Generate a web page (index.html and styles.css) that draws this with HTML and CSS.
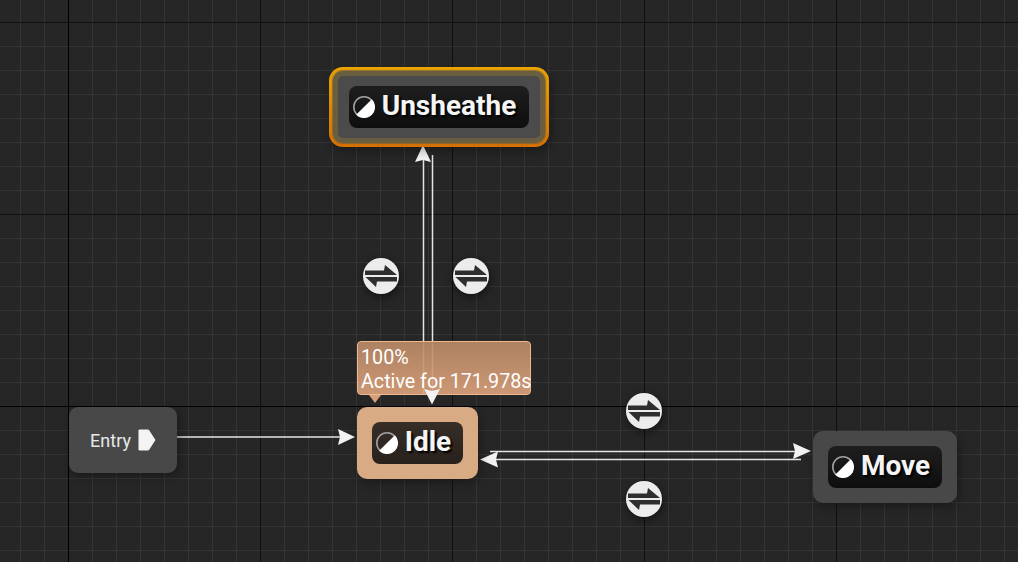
FILE: index.html
```html
<!DOCTYPE html>
<html lang="en">
<head>
<meta charset="utf-8">
<title>State Machine</title>
<link rel="stylesheet" href="styles.css">
</head>
<body>
<main class="graph">
  <svg class="wires" width="1018" height="562" viewBox="0 0 1018 562">
    <g class="wire">
      <path d="M177 437H342"/>
      <path d="M423.500 158V395"/>
      <path d="M432.500 155V392"/>
      <path d="M490 451.500H798"/>
      <path d="M492 459.500H801"/>
    </g>
    <g class="head">
      <path d="M355 437L338 429L340 437L338 445Z"/>
      <path d="M423 145L415 162L423 160L431 162Z"/>
      <path d="M811 451L793 443L795 451L793 459Z"/>
      <path d="M480 459.500L498 451.500L496 459.500L498 467.500Z"/>
    </g>
  </svg>

  <svg class="defs" width="0" height="0">
    <defs>
      <symbol id="transition" viewBox="-19 -19 38 38">
        <circle r="18" fill="#ececec"/>
        <path fill="#2e2e2e" d="M-16 -5.500H3L4 -11L16 -1L-16 -1Z"/>
        <path fill="#2e2e2e" d="M16 5.500H-4L-5 11L-15.500 1L16 1Z"/>
      </symbol>
      <symbol id="state" viewBox="0 0 22 22">
        <circle cx="11" cy="11" r="10.200" fill="none" stroke="#a0a0a0" stroke-width="1.600"/>
        <path fill="#fff" d="M18.800 3.200A11 11 0 0 1 3.200 18.800Z"/>
      </symbol>
    </defs>
  </svg>

  <svg class="transition t-a"><use href="#transition"/></svg>
  <svg class="transition t-b"><use href="#transition"/></svg>
  <svg class="transition t-c"><use href="#transition"/></svg>
  <svg class="transition t-d"><use href="#transition"/></svg>

  <div class="entry">
    <span>Entry</span>
    <svg class="pin" width="18" height="22" viewBox="0 0 18 22"><path d="M1 1H10.500L17 11L10.500 21H1Z"/></svg>
  </div>

  <div class="node unsheathe">
    <div class="pill"><svg class="state-icon"><use href="#state"/></svg><span>Unsheathe</span></div>
  </div>

  <div class="tip">100%<br>Active for 171.978s</div>

  <div class="node idle">
    <div class="pill"><svg class="state-icon"><use href="#state"/></svg><span>Idle</span></div>
  </div>

  <div class="node move">
    <div class="pill"><svg class="state-icon"><use href="#state"/></svg><span>Move</span></div>
  </div>

  <svg class="wires top" width="1018" height="562" viewBox="0 0 1018 562">
    <path class="head" d="M432 404.500L424 389L432 391L440 389Z"/>
  </svg>
</main>
</body>
</html>
```
FILE: styles.css
```css
* { box-sizing: border-box; }

html, body {
  margin: 0;
  height: 100%;
  background: #262626;
  overflow: hidden;
}

.graph {
  position: relative;
  width: 1018px;
  height: 562px;
  overflow: hidden;
  font-family: Roboto, "Liberation Sans", sans-serif;
  background-color: #262626;
  background-image:
    linear-gradient(#000, #000),
    linear-gradient(#000, #000),
    linear-gradient(90deg, #101010 0 1px, transparent 1px),
    linear-gradient(#101010 0 1px, transparent 1px),
    linear-gradient(90deg, #343434 0 1px, transparent 1px),
    linear-gradient(#343434 0 1px, transparent 1px);
  background-size: 1px 100%, 100% 1px, 192px 100%, 100% 192px, 24px 100%, 100% 24px;
  background-position: 68px 0, 0 406px, 68px 0, 0 22px, 20px 0, 0 22px;
  background-repeat: no-repeat, no-repeat, repeat-x, repeat-y, repeat-x, repeat-y;
}

.wires {
  position: absolute;
  left: 0;
  top: 0;
}

.wires.top { z-index: 3; }

.defs { position: absolute; }

.wire path {
  fill: none;
  stroke: #e4e4e4;
  stroke-width: 1.500;
}

.head, .head path { fill: #f2f2f2; }

.transition {
  position: absolute;
  width: 38px;
  height: 38px;
  filter: drop-shadow(1px 3px 4px rgba(0, 0, 0, .5));
}

.t-a { left: 362px; top: 257px; }
.t-b { left: 452px; top: 257px; }
.t-c { left: 625px; top: 392px; }
.t-d { left: 625px; top: 480px; }

.entry {
  position: absolute;
  left: 69px;
  top: 407px;
  width: 108px;
  height: 66px;
  display: flex;
  align-items: center;
  justify-content: center;
  gap: 7px;
  border-radius: 9px;
  background: #484848;
  box-shadow: 2px 4px 10px rgba(0, 0, 0, .3);
  color: #e8e8e8;
  font-size: 18px;
}

.pin {
  fill: #f4f4f4;
  stroke: #f4f4f4;
  stroke-linejoin: round;
}

.node {
  position: absolute;
  display: flex;
  align-items: center;
  justify-content: center;
  height: 72px;
  border-radius: 10px;
  background: #484848;
  box-shadow: 2px 4px 10px rgba(0, 0, 0, .3);
  z-index: 2;
}

.unsheathe {
  left: 329px;
  top: 67px;
  width: 220px;
  height: 80px;
  border-radius: 14px;
  background: linear-gradient(#eba400, #d77000);
}

.unsheathe::before {
  content: "";
  position: absolute;
  inset: 4px;
  border-radius: 10px;
  border: 5px solid #6a5e40;
  background: #4b4b4b;
  box-shadow: 0 0 1px 1px rgba(106, 94, 64, .7);
}

.idle {
  left: 357px;
  top: 407px;
  width: 121px;
  background: #d9ab85;
}

.move {
  left: 813px;
  top: 431px;
  width: 144px;
}

.pill {
  position: relative;
  display: flex;
  align-items: center;
  gap: 7px;
  height: 42px;
  padding: 0 12px 0 4px;
  border-radius: 8px;
  background: linear-gradient(#1e1e1e, #0e0e0e);
  color: #f5f5f5;
  font-size: 28px;
  font-weight: 700;
  line-height: 40px;
  text-shadow: 2px 2px 2px #000;
  white-space: nowrap;
}

.pill span { margin-top: -2px; }

.unsheathe .pill { padding-right: 13px; }

.idle .pill { background: linear-gradient(#372e28, #28201b); }

.state-icon {
  width: 22px;
  height: 22px;
  flex: none;
}

.tip {
  position: absolute;
  left: 357px;
  top: 341px;
  width: 174px;
  height: 54px;
  padding: 4px 0 0 3px;
  border: 1px solid #efb78d;
  border-radius: 4px;
  background: linear-gradient(rgba(184, 137, 103, .92), rgba(219, 161, 122, .92));
  color: #fff;
  font-size: 19.700px;
  line-height: 24px;
  white-space: nowrap;
  z-index: 1;
}

.tip::after {
  content: "";
  position: absolute;
  left: 11px;
  top: 53px;
  border: 6px solid transparent;
  border-top: 8px solid #d99f78;
  border-bottom: 0;
}
```
